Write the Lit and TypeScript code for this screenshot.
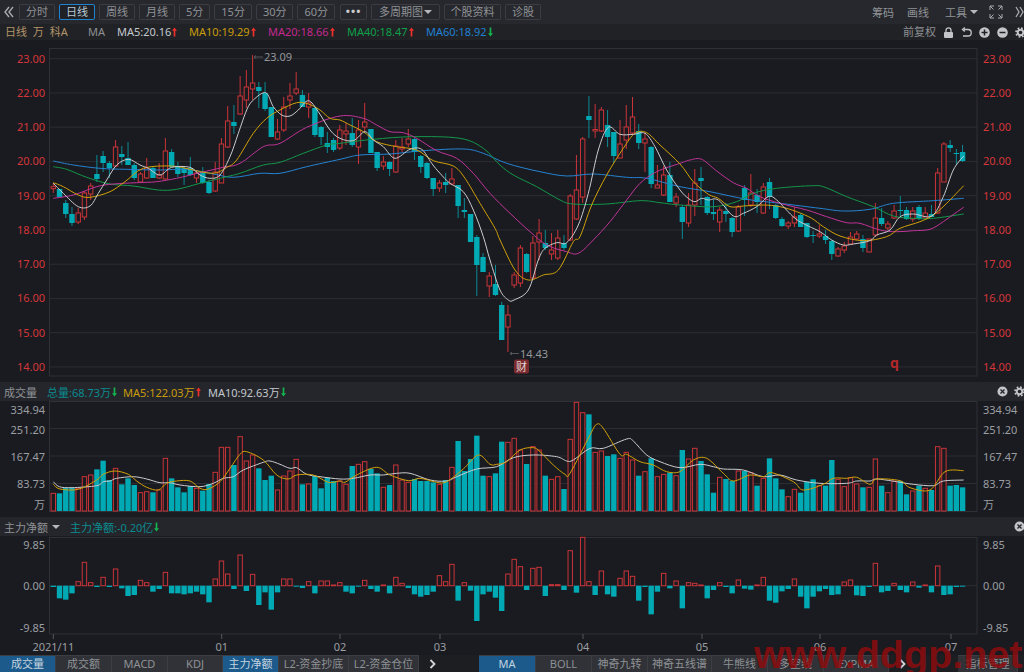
import { LitElement, html, svg, css } from "lit";
import { customElement } from "lit/decorators.js";

type Seg = [number, number, number[]];
const smooth = (segs: Seg[]) => {
  const p: [number, number][] = [];
  for (const [ox, oy, a] of segs) for (let i = 0; i < a.length; i += 2) p.push([ox + a[i] / 3, oy + a[i + 1] / 3]);
  let d = `M${p[0][0].toFixed(1)} ${p[0][1].toFixed(1)}`;
  for (let i = 0; i < p.length - 1; i++) {
    const p0 = p[i - 1] || p[i], p1 = p[i], p2 = p[i + 1], p3 = p[i + 2] || p2;
    const c1x = p1[0] + (p2[0] - p0[0]) / 6, c1y = p1[1] + (p2[1] - p0[1]) / 6;
    const c2x = p2[0] - (p3[0] - p1[0]) / 6, c2y = p2[1] - (p3[1] - p1[1]) / 6;
    d += `C${c1x.toFixed(1)} ${c1y.toFixed(1)} ${c2x.toFixed(1)} ${c2y.toFixed(1)} ${p2[0].toFixed(1)} ${p2[1].toFixed(1)}`;
  }
  return d;
};

const X = (i: number) => 53.3 + 6.228 * i;

// top, bottom, high, low, rising
const candles: number[][] = [
  [186.7,188.7,183,193,1],[189,197,189,197,0],[203,214,200,218,0],[214,223,207,226,0],[213,222,208,224,1],[193,217,191,220,1],[186,194,183,200,1],[174,179,155,182,0],
  [156,163,151,172,0],[163,168,161,178,0],[147,166,140,167,1],[154,157,146,165,0],[158,165,142,165,0],[165,178,163,180,0],[174,182,172,183,1],[168,178,158,179,1],
  [168,178,167,178,0],[175,178,163,179,1],[151,179,138,180,1],[152,167,149,167,0],[166,174,162,177,0],[168,173,167,185,0],[168,175,157,176,0],[173,178,170,183,1],
  [172,183,167,184,0],[182,193,180,194,0],[172,191,162,192,1],[144,183,138,183,1],[121,147,106,148,1],[122,126,105,134,0],[96,114,76,115,1],[87,100,70,108,1],
  [83,89,55,100,1],[87,91,82,108,0],[93,109,82,111,0],[107,137,107,137,0],[132,139,119,140,1],[107,130,97,132,1],[96,100,83,109,1],[89,93,72,95,1],
  [95,107,90,107,0],[103,107,93,118,1],[108,135,107,137,0],[127,137,126,145,0],[143,147,132,153,0],[140,150,138,152,0],[130,148,125,150,1],[131,134,123,145,1],
  [133,145,118,147,0],[130,147,120,164,1],[122,127,103,132,1],[129,153,129,153,0],[152,168,152,171,0],[162,166,156,170,1],[162,169,161,176,0],[146,172,140,173,1],
  [147,149,138,152,1],[139,144,129,147,1],[139,152,138,160,0],[156,167,155,173,0],[163,178,162,179,0],[178,189,178,196,0],[183,188,180,192,1],[182,185,173,193,0],
  [179,184,168,185,1],[185,206,185,218,0],[210,212,198,218,0],[214,242,214,242,0],[237,265,235,296,0],[257,272,253,272,0],[276,286,272,297,1],[284,295,265,296,0],
  [305,340,302,340,0],[315,327,305,352,1],[275,285,272,288,1],[248,283,245,287,1],[254,272,253,273,0],[243,278,236,279,1],[233,242,219,260,1],[243,248,230,250,0],
  [250,254,233,260,1],[238,258,230,260,1],[243,248,235,250,0],[196,240,194,241,1],[190,219,155,220,1],[139,197,137,203,1],[116,120,96,138,0],[129.5,131,104,138,1],
  [110,131,107,132,1],[125,137,110,147,0],[132,156,132,163,0],[144,158,120,158,1],[127,140,105,149,1],[117,133,97,134,1],[131,143,124,149,0],[139,143,133,172,1],
  [147,184,146,188,0],[185,188,165,188,1],[175,195,166,196,1],[175,202,162,202,0],[197,203,193,207,1],[207,222,205,239,0],[205,223,193,227,1],[183,205,169,216,1],
  [178,181,167,205,0],[197,213,196,215,0],[212,214,200,220,0],[210,222,207,232,1],[211,214,203,222,0],[218,232,217,237,0],[207,231,205,232,1],[188,200,185,216,0],
  [193,205,174,207,1],[195,202,189,213,0],[187,213,183,214,1],[182,197,178,209,0],[205,218,204,219,0],[219,226,217,227,0],[223,226,221,229,1],[217,223,207,227,1],
  [215,227,213,227,0],[223,237,223,238,0],[235,236,231,243,0],[234,236,225,238,1],[236,240,230,244,0],[241,254,240,260,0],[249,256,247,257,1],[246,250,242,253,1],
  [237,244,232,245,1],[234,239,231,240,1],[239,248,235,252,0],[239,252,239,252,1],[218,235,203,237,1],[218,224,208,226,0],[224,228,221,230,1],[211,218,205,219,1],
  [210,211,196,216,0],[210,219,207,220,0],[211,219,207,222,1],[207,219,205,220,0],[213,218,207,218,1],[214,217,205,217,0],[173,213,168,214,1],[144,182,142,182,1],
  [145,148,140,152,0],[153,154,149,165,0],[152,161,145,162,0],
];

const maLines: { cls: string; segs: Seg[] }[] = [
  { cls: "l-blue", segs: [
    [0,50,[160,333,220,345,300,355,380,358,480,360,560,358,640,372,700,382,780,370,840,370,920,350,1020,328]],
    [340,90,[60,195,150,192,250,182,370,177,430,190,500,220,600,245,680,258,760,252,860,262,920,265,1020,290]],
    [680,90,[90,305,200,328,300,340,420,355,490,363,570,358,640,340,760,332,851,325]],
  ]},
  { cls: "l-green", segs: [
    [0,50,[160,350,200,358,260,382,330,402,400,408,475,420,530,418,600,400,680,380,720,370,790,345,840,337,910,310,980,285,1020,280]],
    [340,90,[100,148,220,140,360,145,430,175,480,225,520,255,590,290,660,330,700,342,800,342,900,332,960,338,1020,345]],
    [680,90,[100,350,170,335,220,310,290,295,400,287,435,292,500,320,580,350,640,378,700,385,760,385,851,372]],
  ]},
  { cls: "l-pink", segs: [
    [0,50,[160,445,220,435,290,410,340,402,410,398,470,395,530,385,600,368,670,352,720,340,790,290,840,280,920,232,1020,198]],
    [340,90,[70,85,110,105,150,125,190,128,230,145,290,182,350,205,400,250,450,310,510,370,570,425,620,465,680,485,715,490,760,450,810,395,860,330,900,280,950,245,1020,220]],
    [680,90,[30,210,65,208,110,243,160,278,200,295,240,320,300,340,380,360,440,380,500,398,540,400,600,420,650,425,700,422,750,418,790,395,825,370,851,352]],
  ]},
  { cls: "l-yellow", segs: [
    [0,50,[160,398,190,410,235,435,270,442,330,425,375,395,430,355,515,348,570,358,640,370,680,352,710,330,760,250,800,205,840,180,890,158,925,162,960,180,990,205,1020,210]],
    [340,90,[30,105,70,125,110,155,170,170,230,180,280,212,340,228,375,265,420,340,465,415]],
    [440,240,[180,0,225,90,265,120,310,105,355,90,400,5]],
    [340,90,[720,440,755,345,800,255,850,175,885,130,920,128,960,165,1020,222]],
    [680,90,[40,275,85,313,115,325,150,350,190,348,250,345,300,350,350,365,395,385,430,410,480,438,550,452,620,440,660,415,720,395,760,375,800,340,851,287]],
  ]},
  { cls: "l-white", segs: [
    [0,50,[160,400,190,430,235,470,270,468,295,430,320,390,350,345,385,328,420,345,445,355,480,375,515,352,570,352,600,375,630,385,660,375,690,320,715,250,740,180,760,150,797,128,820,170,845,195,870,198,895,180,925,152,955,185,990,240,1020,265]],
    [340,90,[40,152,75,125,100,150,130,170,165,205,210,178,245,178,275,220,300,250,330,280,370,305,400,360,430,440]],
    [440,240,[150,60,180,150,205,180,222,180,265,150,295,60,315,25]],
    [340,90,[650,458,680,458,715,405,745,310,775,180,805,112,840,133,880,133,915,130,945,170,980,240,1020,300]],
    [680,90,[25,325,45,335,65,325,85,330,115,330,160,378,190,370,230,350,265,320,290,330,345,385,385,408,420,425,455,450,490,465,520,462,570,452,590,435,630,420,660,380,700,372,755,378,790,320,820,240,851,198]],
  ]},
];

const volTops = [
  ...[355,355,338,338,340,305,300,283,257,315,280,328,310,330,353,350,352,345,250,310,337,352,333,340,347,327,292,217,217,270,185,258,240,280,315,302,345,303,288,253,328,327,303,340,308,318].map((z) => 375 + z / 3),
  ...[258,268,213,208,200,222,235,277,270,210,255,262,252,258,258,262,268,255,217,138,228,192,122,242,245,235,140,142,130,165,207,155,165,242,253,245,282,133,22,53,58,172,168,183,178,190,172,195,242,230,190,245,238,233,242,
      165,192,160,198,238,293,247,252,258,228,228,233,272,250,190,250,283,305,283,293,260,253,272,272,195,253,275,248,267,277,277,192,272,293,258,258,298,288,272,280,285,155,160,272,270,277].map((z) => 395 + z / 3),
];

const volLines: { cls: string; segs: Seg[] }[] = [
  { cls: "l-white", segs: [
    [0,375,[160,320,178,335,216,338,290,332,310,320,330,318,350,310,400,305,440,312,480,323,510,323,540,330,600,335,640,325,670,310,700,305,730,285,790,262,810,258,840,268,870,280,890,278,920,298,960,305,1020,312]],
    [340,395,[40,250,90,240,130,240,170,235,210,235,270,255,320,258,350,245,410,222,470,215,520,188,580,180,650,185,680,198,700,195,750,160,790,160,860,132,880,138,920,180,960,200,1020,218]],
    [680,395,[60,208,100,215,130,222,190,225,250,245,300,240,350,255,420,265,500,265,530,258,570,258,590,252,650,260,700,268,760,272,790,258,851,255]],
  ]},
  { cls: "l-yellow", segs: [
    [0,375,[160,328,180,342,235,343,290,315,310,298,345,288,385,298,410,318,440,337,475,345,500,325,530,318,570,318,600,340,625,342,660,320,690,280,720,238,740,230,790,255,830,300,865,312,890,300,940,300,985,322,1020,318]],
    [340,395,[15,262,50,240,110,217,150,240,205,257,240,250,290,262,320,260,370,222,415,180,450,208,470,208,500,200,540,165,580,158,600,170,640,210,675,238,690,235,750,120,770,88,790,100,840,178,860,178,900,200,940,210,980,230,1020,230]],
    [680,395,[40,195,80,190,130,235,160,258,210,240,250,245,275,233,340,260,370,285,430,268,460,250,500,250,530,247,570,268,590,252,660,257,690,278,750,285,795,230,851,227]],
  ]},
];

const netZ = [216,250,254,235,200,142,203,216,187,216,162,220,243,240,196,203,230,222,172,235,235,238,235,230,238,262,192,138,177,222,120,228,178,270,232,284,232,192,192,215,219,200,235,198,198,210,203,230,235,213,196,222,230,210,235,187,205,219,238,245,240,230,182,200,148,257,203,227,318,238,230,248,288,177,
  133,155,225,160,157,243,209,209,225,107,233,67,200,240,168,238,245,190,168,184,257,216,298,230,175,220,198,280,203,205,210,250,225,203,216,235,195,221,224,210,187,257,263,229,222,192,245,280,245,229,222,240,238,201,195,241,243,216,145,232,228,205,225,232,201,218,210,232,153,240,238,216,215];

const priceLabels = ["23.00","22.00","21.00","20.00","19.00","18.00","17.00","16.00","15.00","14.00"];
const priceY = (i: number) => 58.7 + i * 34.25;

const volLabels: [string, number][] = [["334.94",410],["251.20",430],["167.47",457],["83.73",484],["万",505]];
const volGrid = [428.5, 456, 483.5];
const netLabels: [string, number][] = [["9.85",545],["0.00",586],["-9.85",628]];
const dates: [string, number][] = [["2021/11",53.3],["01",221.7],["02",340],["03",440],["04",583],["05",702],["06",820],["07",951]];

const leftTabs: [string, number, boolean][] = [["成交量",56,true],["成交额",56,false],["MACD",56,false],["KDJ",55,false],["主力净额",56,true],["L2-资金抄底",70,false],["L2-资金仓位",70,false]];
const rightTabs: [string, number, boolean][] = [["MA",57,true],["BOLL",56,false],["神奇九转",56,false],["神奇五线谱",64,false],["牛熊线",56,false],["多空线",56,false],["EXPMA",65,false]];
const periods = ["分时","日线","周线","月线","5分","15分","30分","60分"];

const arrow = (up: boolean) =>
  up
    ? html`<svg class="arr up" viewBox="0 0 6 11"><path d="M3 0 6 4H4V11H2V4H0Z"/></svg>`
    : html`<svg class="arr down" viewBox="0 0 6 11"><path d="M3 11 6 7H4V0H2V7H0Z"/></svg>`;

const closeIcon = html`<svg class="ico" viewBox="0 0 12 12"><circle cx="6" cy="6" r="5.5" fill="#c3c5c8"/><path d="M3.8 3.8 8.2 8.2M8.2 3.8 3.8 8.2" stroke="#26272c" stroke-width="1.5"/></svg>`;
const gearIcon = html`<svg class="ico" viewBox="0 0 12 12"><circle cx="6" cy="6" r="3" fill="none" stroke="#c3c5c8" stroke-width="2"/><circle cx="6" cy="6" r="4.8" fill="none" stroke="#c3c5c8" stroke-width="2" stroke-dasharray="1.9 1.87"/></svg>`;

@customElement("app-root")
export class AppRoot extends LitElement {
  static styles = css`
    :host { display: block; position: relative; width: 1024px; height: 672px; overflow: hidden; background: #1a1b20; font-family: "Noto Sans", "Noto Sans CJK SC", sans-serif; font-size: 11px; color: #a3a6a9; }
    svg.chart { display: block; width: 1024px; }
    .h-main { height: 342px; }
    .h-vol { height: 116px; }
    .h-net { height: 119px; }

    .toolbar { height: 24px; box-sizing: border-box; display: flex; align-items: center; gap: 4px; background: #27282d; padding-left: 3px; }
    .back { width: 12px; height: 12px; flex: none; }
    .btn { height: 16px; line-height: 14px; box-sizing: border-box; padding: 0 6px; border: 1px solid #3b3d42; border-radius: 2px; color: #8f9296; white-space: nowrap; flex: none; }
    .btn.sel { border-color: #1f82cc; color: #b9c9d6; background: #1f2126; }
    .btn.dots { width: 27px; padding: 0; text-align: center; letter-spacing: 1px; color: #c9cbce; font-weight: 700; line-height: 12px; margin-left: 1px; }
    .btn.tight { padding: 0 5.5px; }
    .btn.multi { width: 69px; padding: 0 7px; display: flex; justify-content: space-between; align-items: center; }
    .caret { width: 0; height: 0; border: 4px solid transparent; border-top: 4px solid #b5b7ba; border-bottom: 0; display: inline-block; }
    .tools { margin-left: auto; display: flex; align-items: center; color: #8f9296; }
    .tools .a { margin-right: 13px; }
    .tools .b { margin-right: 16px; }
    .tools .c { margin-right: 3px; }
    .tools .caret { margin-right: 11px; }
    .tools svg { flex: none; }
    .fs { width: 14px; height: 14px; margin-right: 12px; }
    .more { width: 9px; height: 12px; }

    .legend { height: 16px; background: #212226; display: flex; align-items: center; padding-left: 5px; white-space: nowrap; line-height: 16px; }
    .name { color: #b39569; width: 83px; flex: none; word-spacing: 3px; }
    .ma { color: #8e9094; width: 29px; flex: none; }
    .item { display: flex; align-items: center; flex: none; }
    .w5 { width: 72px; } .w78 { width: 79px; }
    .arr { width: 5px; height: 10px; margin-left: 1px; flex: none; }
    .arr.up { fill: #ef2f2a; } .arr.down { fill: #14b450; }
    .c-white { color: #c3c8cd; } .c-yellow { color: #c99c0b; } .c-pink { color: #c4288f; } .c-green { color: #0fa04a; } .c-blue { color: #1f80d2; } .c-teal { color: #0a8b90; }
    .right { margin-left: auto; display: flex; align-items: center; gap: 7px; color: #8e9094; }
    .r-ico { width: 11px; height: 11px; flex: none; }
    .r-gear { margin-right: -2px; }

    .sub { height: 19px; background: #25262b; display: flex; align-items: center; padding-left: 4px; white-space: nowrap; }
    .sub .title { color: #8f9296; flex: none; }
    .sub .net-title { display: flex; align-items: center; gap: 4px; width: 66px; flex: none; }
    .vt { width: 43px; flex: none; }
    .v1 { width: 76px; } .v2 { width: 85px; }
    .sub-right { margin-left: auto; display: flex; gap: 6px; align-items: center; margin-right: -1px; }
    .ico { width: 11px; height: 11px; flex: none; display: block; }

    .tabs { height: 17px; display: flex; background: #1d1e22; white-space: nowrap; }
    .tab { box-sizing: border-box; height: 17px; line-height: 16px; text-align: center; background: #303237; border: 1px solid #3c3e43; border-width: 1px 1px 0 0; color: #8e9195; flex: none; }
    .tab.on { background: #1b5a8a; color: #c4d4e0; }
    .chev { width: 7px; height: 10px; margin: 4px 0 0 10px; flex: none; }
    .gap { width: 43px; flex: none; }
    .gap2 { width: 52px; flex: none; }
    .mgr { width: 60px; }

    .grid { stroke: #2b2d32; stroke-width: 1; }
    .frame { fill: none; stroke: #2f3136; stroke-width: 1; }
    .tick { stroke: #55575c; stroke-width: 1; fill: none; }
    .r { stroke: #c93438; stroke-width: 1; fill: none; }
    .rbody { stroke: #c93438; stroke-width: 1; fill: #1a1b20; }
    .t { stroke: #0b8a93; stroke-width: 1; }
    .tbody { fill: #00aab5; }
    .line { fill: none; stroke-width: 1; stroke-linejoin: round; }
    .l-white { stroke: #cbcccf; } .l-yellow { stroke: #d0a00a; } .l-pink { stroke: #c03498; } .l-green { stroke: #13964a; } .l-blue { stroke: #2583d2; }
    text { font-family: "Noto Sans", "Noto Sans CJK SC", sans-serif; font-size: 11px; }
    .price { fill: #d5363a; }
    .gray { fill: #9b9ea2; }
    .ann { fill: #94979b; }
    .badge { fill: #7b2a2e; }
    .badge-t { fill: #e0d6d6; }
    .q { fill: #b5282a; font-size: 14px; font-weight: 700; }
    .wm { position: absolute; left: 754px; top: 628px; font: 700 39.5px "Liberation Sans", sans-serif; color: rgba(140, 12, 14, 0.85); line-height: 52px; white-space: nowrap; pointer-events: none; }
  `;

  private main() {
    return html`<svg class="chart h-main" viewBox="0 40 1024 342">
      ${priceLabels.map((_, i) => svg`<line class="grid" x1="49" x2="977" y1=${priceY(i)} y2=${priceY(i)}></line>`)}
      <rect class="frame" x="49.5" y="48.5" width="927.5" height="327.5"></rect>
      ${priceLabels.map((p, i) => svg`
        <text class="price" x="45" y=${priceY(i) + 4} text-anchor="end">${p}</text>
        <text class="price" x="983" y=${priceY(i) + 4}>${p}</text>`)}
      ${candles.map(([t, b, h, l, up], i) => {
        const x = X(i);
        return up
          ? svg`<line class="r" x1=${x} x2=${x} y1=${h} y2=${t}></line><line class="r" x1=${x} x2=${x} y1=${b} y2=${l}></line><rect class="rbody" x=${x - 2.2} y=${t} width="4.4" height=${Math.max(b - t, 1)}></rect>`
          : svg`<line class="t" x1=${x} x2=${x} y1=${h} y2=${l}></line><rect class="tbody" x=${x - 2.7} y=${t} width="5.4" height=${Math.max(b - t, 1)}></rect>`;
      })}
      ${maLines.map((m) => svg`<path class="line ${m.cls}" d=${smooth(m.segs)}></path>`)}
      <path class="tick" d="M254 57H263M254 57l2-1.5M254 57l2 1.5"></path>
      <text class="ann" x="264" y="61">23.09</text>
      <path class="tick" d="M510 353.5H519M510 353.5l2-1.5M510 353.5l2 1.5"></path>
      <text class="ann" x="520" y="357.5">14.43</text>
      <rect class="badge" x="514" y="359.5" width="15" height="14" rx="2"></rect>
      <text class="badge-t" x="516" y="370.5">财</text>
      <text class="q" x="890" y="368">q</text>
    </svg>`;
  }

  private volume() {
    return html`<svg class="chart h-vol" viewBox="0 401 1024 116">
      ${volGrid.map((y) => svg`<line class="grid" x1="49" x2="977" y1=${y} y2=${y}></line>`)}
      <rect class="frame" x="49.5" y="401.5" width="927.5" height="110"></rect>
      ${volLabels.map(([t, y]) => svg`
        <text class="gray" x="45" y=${y + 4} text-anchor="end">${t}</text>
        <text class="gray" x="983" y=${y + 4}>${t}</text>`)}
      ${volTops.map((y, i) =>
        candles[i][4]
          ? svg`<rect class="rbody" x=${X(i) - 2.2} y=${y} width="4.4" height=${511 - y}></rect>`
          : svg`<rect class="tbody" x=${X(i) - 2.7} y=${y} width="5.4" height=${511 - y}></rect>`
      )}
      ${volLines.map((m) => svg`<path class="line ${m.cls}" d=${smooth(m.segs)}></path>`)}
    </svg>`;
  }

  private net() {
    return html`<svg class="chart h-net" viewBox="0 536 1024 119">
      <line class="grid" x1="49" x2="977" y1="585.7" y2="585.7"></line>
      <rect class="frame" x="49.5" y="537.5" width="927.5" height="96.5"></rect>
      ${netLabels.map(([t, y]) => svg`
        <text class="gray" x="45" y=${y + 4} text-anchor="end">${t}</text>
        <text class="gray" x="983" y=${y + 4}>${t}</text>`)}
      ${netZ.map((z, i) => {
        const y = 515 + z / 3;
        const zero = 585.7;
        return z < 212
          ? svg`<rect class="rbody" x=${X(i) - 2.2} y=${y} width="4.4" height=${zero - y}></rect>`
          : svg`<rect class="tbody" x=${X(i) - 2.7} y=${zero} width="5.4" height=${Math.max(y - zero, 1)}></rect>`;
      })}
      ${dates.map(([t, x]) => svg`
        <line class="tick" x1=${x} x2=${x} y1="634" y2="639"></line>
        <text class="gray" x=${x} y="651" text-anchor="middle">${t}</text>`)}
    </svg>`;
  }

  render() {
    return html`
      <div class="toolbar">
        <svg class="back" viewBox="0 0 12 12"><path d="M6 1 2 6 6 11M10 1 6 6 10 11" fill="none" stroke="#a9abae" stroke-width="1.4"/></svg>
        ${periods.map((p, i) => html`<div class="btn ${i === 1 ? "sel" : ""}">${p}</div>`)}
        <div class="btn dots">•••</div>
        <div class="btn multi">多周期图<i class="caret"></i></div>
        <div class="btn tight">个股资料</div>
        <div class="btn">诊股</div>
        <div class="tools">
          <span class="a">筹码</span><span class="b">画线</span><span class="c">工具</span><i class="caret"></i>
          <svg class="fs" viewBox="0 0 14 14"><path d="M1 5V1H5M1 1 4.5 4.5M9 1H13V5M13 1 9.5 4.5M1 9V13H5M1 13 4.5 9.5M13 9V13H9M13 13 9.5 9.5" fill="none" stroke="#a9abae" stroke-width="1"/></svg>
          <svg class="more" viewBox="0 0 9 12"><path d="M1 1 4 6 1 11M5 1 8 6 5 11" fill="none" stroke="#a9abae" stroke-width="1.3"/></svg>
        </div>
      </div>
      <div class="legend">
        <span class="name">日线 万 科A</span><span class="ma">MA</span>
        <div class="item c-white w5">MA5:20.16${arrow(true)}</div>
        <div class="item c-yellow w78">MA10:19.29${arrow(true)}</div>
        <div class="item c-pink w78">MA20:18.66${arrow(true)}</div>
        <div class="item c-green w78">MA40:18.47${arrow(true)}</div>
        <div class="item c-blue w78">MA60:18.92${arrow(false)}</div>
        <div class="right">
          <span>前复权</span>
          <svg class="r-ico" viewBox="0 0 11 11"><path d="M3 5V3.3a2.5 2.5 0 0 1 5 0V5" fill="none" stroke="#c3c5c8" stroke-width="1.3"/><rect x="1" y="5" width="9" height="6" rx="1" fill="#c3c5c8"/></svg>
          <svg class="r-ico" viewBox="0 0 11 11"><path d="M3 2.5H7A3 3 0 0 1 7 9H2M3.8.5 1.5 2.5 3.8 4.5" fill="none" stroke="#c3c5c8" stroke-width="1.3"/></svg>
          <svg class="r-ico" viewBox="0 0 11 11"><circle cx="5.5" cy="5.5" r="5.3" fill="#c3c5c8"/><path d="M2.5 5.5H8.5M5.5 2.5V8.5" stroke="#212226" stroke-width="1.5"/></svg>
          <svg class="r-ico" viewBox="0 0 11 11"><circle cx="5.5" cy="5.5" r="5.3" fill="#c3c5c8"/><path d="M2.5 5.5H8.5" stroke="#212226" stroke-width="1.5"/></svg>
          <svg class="r-ico r-gear" viewBox="0 0 12 12"><circle cx="6" cy="6" r="3" fill="none" stroke="#c3c5c8" stroke-width="2"/><circle cx="6" cy="6" r="4.8" fill="none" stroke="#c3c5c8" stroke-width="2" stroke-dasharray="1.9 1.87"/></svg>
        </div>
      </div>
      ${this.main()}
      <div class="sub">
        <span class="title vt">成交量</span>
        <div class="item c-teal v1">总量:68.73万${arrow(false)}</div>
        <div class="item c-yellow v2">MA5:122.03万${arrow(true)}</div>
        <div class="item c-white">MA10:92.63万${arrow(false)}</div>
        <div class="sub-right">${closeIcon}${gearIcon}</div>
      </div>
      ${this.volume()}
      <div class="sub">
        <span class="title net-title">主力净额<i class="caret"></i></span>
        <div class="item c-teal">主力净额:-0.20亿${arrow(false)}</div>
        <div class="sub-right">${closeIcon}</div>
      </div>
      ${this.net()}
      <div class="tabs">
        ${leftTabs.map(([t, w, on]) => html`<div class="tab ${on ? "on" : ""}" style="width:${w}px">${t}</div>`)}
        <svg class="chev" viewBox="0 0 7 10"><path d="M1.5 1 5.5 5 1.5 9" fill="none" stroke="#d5d6d8" stroke-width="1.8"/></svg>
        <div class="gap"></div>
        ${rightTabs.map(([t, w, on]) => html`<div class="tab ${on ? "on" : ""}" style="width:${w}px">${t}</div>`)}
        <svg class="chev" viewBox="0 0 7 10"><path d="M1.5 1 5.5 5 1.5 9" fill="none" stroke="#d5d6d8" stroke-width="1.8"/></svg>
        <div class="gap2"></div>
        <div class="tab mgr">指标管理</div>
      </div>
      <div class="wm">www.ddgp.net</div>
    `;
  }
}
